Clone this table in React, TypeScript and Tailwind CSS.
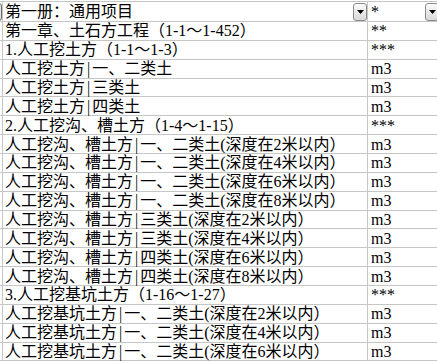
const rows: [string, string][] = [
  ["第一册：通用项目", "*"],
  ["第一章、土石方工程（1-1～1-452）", "**"],
  ["1.人工挖土方（1-1～1-3）", "***"],
  ["人工挖土方|一、二类土", "m3"],
  ["人工挖土方|三类土", "m3"],
  ["人工挖土方|四类土", "m3"],
  ["2.人工挖沟、槽土方（1-4～1-15）", "***"],
  ["人工挖沟、槽土方|一、二类土(深度在2米以内）", "m3"],
  ["人工挖沟、槽土方|一、二类土(深度在4米以内）", "m3"],
  ["人工挖沟、槽土方|一、二类土(深度在6米以内）", "m3"],
  ["人工挖沟、槽土方|一、二类土(深度在8米以内）", "m3"],
  ["人工挖沟、槽土方|三类土(深度在2米以内）", "m3"],
  ["人工挖沟、槽土方|三类土(深度在4米以内）", "m3"],
  ["人工挖沟、槽土方|四类土(深度在6米以内）", "m3"],
  ["人工挖沟、槽土方|四类土(深度在8米以内）", "m3"],
  ["3.人工挖基坑土方（1-16～1-27）", "***"],
  ["人工挖基坑土方|一、二类土(深度在2米以内）", "m3"],
  ["人工挖基坑土方|一、二类土(深度在4米以内）", "m3"],
  ["人工挖基坑土方|一、二类土(深度在6米以内）", "m3"],
];

function FilterButton() {
  return (
    <div className="flex h-[18px] w-[14px] shrink-0 items-center justify-center rounded-[3px] border border-[#8a8a8a] bg-gradient-to-b from-[#fbfbfb] to-[#d9d9d9]">
      <svg width="7" height="4" viewBox="0 0 7 4">
        <path d="M0 0 L7 0 L3.5 4 Z" fill="#000" />
      </svg>
    </div>
  );
}

// split on the bar so it gets a little air either side, like the sheet font
function Name({ text }: { text: string }) {
  const parts = text.split("|");
  if (parts.length === 1) return <>{text}</>;
  return (
    <>
      {parts[0]}
      <span className="mx-[2px]">|</span>
      {parts[1]}
    </>
  );
}

export default function App() {
  return (
    <div
      className="h-[362px] w-[437px] overflow-hidden bg-white pt-px text-[16px] leading-none text-black"
      style={{ fontFamily: '"Liberation Serif", "Noto Sans CJK SC", serif' }}
    >
      <div className="w-[460px] border-t border-[#c6c6c6]">
        {rows.map(([name, unit], i) => (
          <div
            key={i}
            className={`flex border-b border-[#c6c6c6] ${i === 0 ? "h-[20px]" : "h-[18.87px]"}`}
          >
            {/* edge of previous column */}
            <div className="relative w-[3px] shrink-0 border-r border-[#c6c6c6]">
              {i === 0 && (
                <div className="absolute right-0 top-[1px] h-[18px] w-[6px] rounded-[3px] border border-[#6a6a6a] bg-[#e6e6e6]" />
              )}
            </div>
            {/* name column */}
            <div className="flex w-[365px] shrink-0 items-center border-r border-[#c6c6c6] pl-[2px]">
              <span className="flex-1 whitespace-nowrap pt-[1px]">
                <Name text={name} />
              </span>
              {i === 0 && <FilterButton />}
            </div>
            {/* unit column */}
            <div className="flex w-[92px] shrink-0 items-center pl-[3px]">
              <span className="w-[54px] shrink-0 whitespace-nowrap pt-[1px]">{unit}</span>
              {i === 0 && <FilterButton />}
            </div>
          </div>
        ))}
      </div>
    </div>
  );
}
